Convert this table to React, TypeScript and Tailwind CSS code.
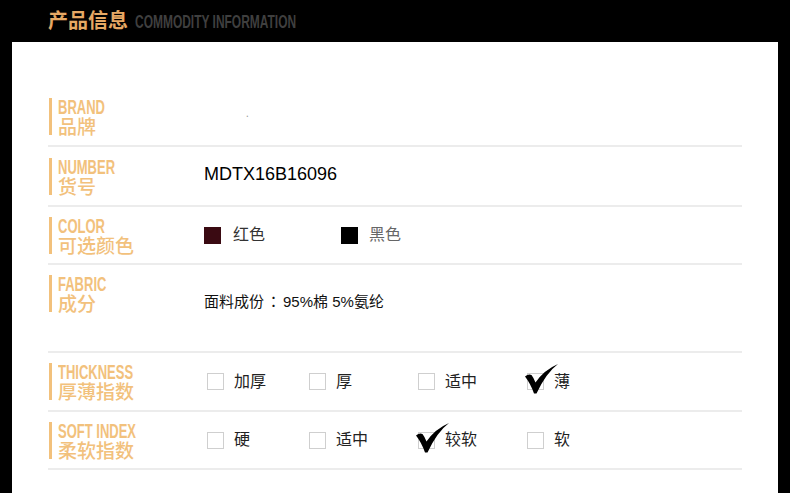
import React from 'react'

const cjk = "font-['Liberation_Sans','Noto_Sans_CJK_SC',sans-serif]"

function Label({ en, zh }: { en: string; zh: string }) {
    return (
        <div className="flex w-[156px] shrink-0">
            <div className="ml-[1px] h-[37px] w-[3px] bg-[#f2c17c]" />
            <div className="ml-[6px] flex flex-col text-[#f2c17c]">
                <div className="h-[18px] whitespace-nowrap text-[20px] leading-[18px]">
                    <span className="block w-max origin-left scale-x-[0.65] font-['Liberation_Sans',sans-serif] text-[20px] font-bold leading-[18px]">
                        {en}
                    </span>
                </div>
                <div className="h-[19px] whitespace-nowrap font-['Noto_Sans_CJK_SC',sans-serif] text-[19px] font-medium leading-[19px]">
                    {zh}
                </div>
            </div>
        </div>
    )
}

function Check() {
    return (
        <svg className="absolute -left-[3px] -top-[10px]" width="33" height="30" viewBox="0 0 33 30">
            <path
                d="M0 12.5 Q3.5 9.5 6.5 11 Q8.5 13.5 10.5 18.5 Q19 6 33 0 Q21 9 11.5 29.5 L9 29.5 Q5.5 19.5 0 12.5 Z"
                fill="#000"
            />
        </svg>
    )
}

function Box({ label, checked, w }: { label: string; checked?: boolean; w?: string }) {
    return (
        <div className={`flex items-center ${w ?? ''}`}>
            <div className="relative h-[17px] w-[17px] border border-[#cfcfcf] bg-white">
                {checked && <Check />}
            </div>
            <span className={`ml-[10px] text-[16px] leading-[20px] text-[#222] ${cjk}`}>{label}</span>
        </div>
    )
}

function Line() {
    return <div className="h-[2px] w-[694px] bg-[#ececec]" />
}

export default function App() {
    return (
        <div className="flex min-h-screen w-[790px] flex-col bg-black">
            <div className="flex h-[42px] items-start pl-[48px] pt-[8px]">
                <span className="font-['Noto_Sans_CJK_SC',sans-serif] text-[20px] font-bold leading-[24px] text-[#e6a864]">
                    产品信息
                </span>
                <span className="ml-[7px] mt-[4px] block w-max origin-left scale-x-[0.63] whitespace-nowrap font-['Liberation_Sans',sans-serif] text-[19px] font-bold leading-[20px] text-[#3f3f3f]">
                    COMMODITY INFORMATION
                </span>
            </div>

            <div className="mx-[12px] h-[451px] bg-white pl-[36px] pt-[45px]">
                <div className="flex h-[58px] items-center">
                    <Label en="BRAND" zh="品牌" />
                    <span className="ml-[42px] mt-[-6px] text-[10px] text-[#999]">.</span>
                </div>
                <Line />
                <div className="flex h-[58px] items-center">
                    <Label en="NUMBER" zh="货号" />
                    <span className="mt-[-5px] font-['Liberation_Sans',sans-serif] text-[18px] leading-[22px] text-black">MDTX16B16096</span>
                </div>
                <Line />
                <div className="flex h-[56px] items-center">
                    <Label en="COLOR" zh="可选颜色" />
                    <div className="flex items-center">
                        <div className="flex w-[137px] items-center">
                            <div className="h-[17px] w-[17px] bg-[#3a0a12]" />
                            <span className={`ml-[12px] text-[16px] leading-[20px] text-[#333] ${cjk}`}>红色</span>
                        </div>
                        <div className="flex items-center">
                            <div className="h-[17px] w-[17px] bg-black" />
                            <span className={`ml-[11px] text-[16px] leading-[20px] text-[#666] ${cjk}`}>黑色</span>
                        </div>
                    </div>
                </div>
                <Line />
                <div className="flex h-[86px] items-start pt-[10px]">
                    <Label en="FABRIC" zh="成分" />
                    <span className={`mt-[16px] text-[15px] leading-[20px] text-[#111] ${cjk}`}>
                        面料成份<span className="inline-block w-[19px] text-center font-['Noto_Sans_CJK_JP',sans-serif]">：</span>95%棉 5%氨纶
                    </span>
                </div>
                <Line />
                <div className="flex h-[57px] items-center">
                    <Label en="THICKNESS" zh="厚薄指数" />
                    <div className="flex items-center pl-[3px]">
                        <Box label="加厚" w="w-[102px]" />
                        <Box label="厚" w="w-[109px]" />
                        <Box label="适中" w="w-[109px]" />
                        <Box label="薄" checked />
                    </div>
                </div>
                <Line />
                <div className="flex h-[56px] items-center">
                    <Label en="SOFT INDEX" zh="柔软指数" />
                    <div className="flex items-center pl-[3px]">
                        <Box label="硬" w="w-[102px]" />
                        <Box label="适中" w="w-[109px]" />
                        <Box label="较软" w="w-[109px]" checked />
                        <Box label="软" />
                    </div>
                </div>
                <Line />
            </div>
        </div>
    )
}
